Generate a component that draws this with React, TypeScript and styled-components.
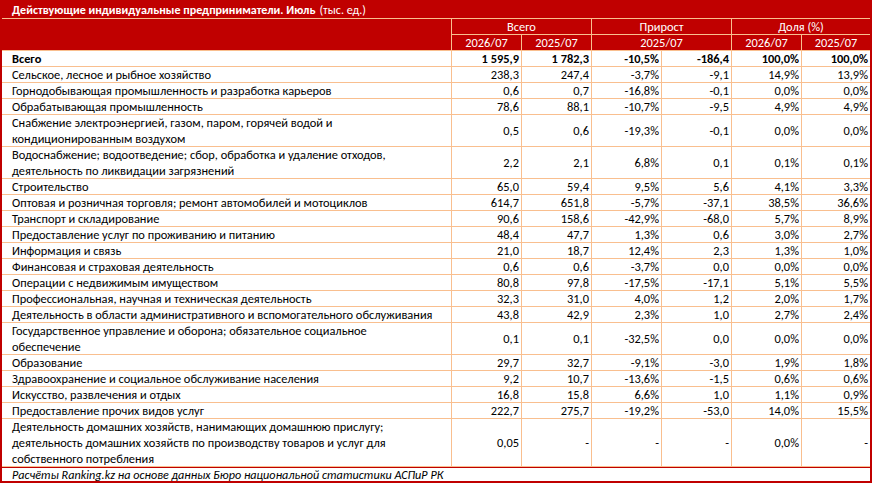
import React from "react";
import styled, { createGlobalStyle } from "styled-components";

const RED = "#C00000";
const LINE = "#F9BF8F";

const GlobalStyle = createGlobalStyle`
  html, body { margin: 0; padding: 0; background: #ffffff; }
  body { font-family: Carlito, Lato, "Liberation Sans", sans-serif; }
`;

const Frame = styled.div`
  width: 872px;
  box-sizing: border-box;
  border-left: 2px solid ${RED};
  border-right: 2px solid ${RED};
  font-family: Carlito, Lato, "Liberation Sans", sans-serif;
  font-size: 12.4px;
  color: #000;
`;

const Title = styled.div`
  height: 19px;
  box-sizing: border-box;
  background: ${RED};
  color: #fff;
  border-bottom: 1px solid ${LINE};
  padding-left: 10px;
  display: flex;
  align-items: center;
  font-size: 12.1px;
  white-space: nowrap;
`;

const TitleMain = styled.span`
  font-weight: 700;
  margin-right: 4px;
`;

const Grid = styled.div`
  display: grid;
  grid-template-columns: 450px repeat(5, 70px) 68px;
`;

const HeadCell = styled.div<{ $span?: number; $rows?: number; $last?: boolean }>`
  grid-column: span ${(p) => p.$span ?? 1};
  grid-row: span ${(p) => p.$rows ?? 1};
  height: ${(p) => (p.$rows ?? 1) * 16}px;
  box-sizing: border-box;
  background: ${RED};
  color: #fff;
  border-bottom: 1px solid ${LINE};
  border-right: ${(p) => (p.$last ? "none" : `1px solid ${LINE}`)};
  display: flex;
  align-items: center;
  justify-content: center;
  line-height: 15px;
  white-space: nowrap;
`;

const LabelCell = styled.div<{ $lines: number; $bold?: boolean }>`
  height: ${(p) => p.$lines * 16}px;
  box-sizing: border-box;
  border-bottom: 1px solid ${LINE};
  border-right: 1px solid ${LINE};
  padding-left: 10px;
  display: flex;
  align-items: center;
  line-height: 16px;
  white-space: nowrap;
  font-weight: ${(p) => (p.$bold ? 700 : 400)};
`;

const NumCell = styled.div<{ $lines: number; $bold?: boolean; $last?: boolean }>`
  height: ${(p) => p.$lines * 16}px;
  box-sizing: border-box;
  border-bottom: 1px solid ${LINE};
  border-right: ${(p) => (p.$last ? "none" : `1px solid ${LINE}`)};
  padding-right: 2px;
  display: flex;
  align-items: center;
  justify-content: flex-end;
  line-height: 15px;
  white-space: nowrap;
  font-weight: ${(p) => (p.$bold ? 700 : 400)};
`;

const Footer = styled.div`
  height: 16px;
  box-sizing: border-box;
  border-top: 1px solid ${RED};
  border-bottom: 2px solid ${RED};
  padding-left: 10px;
  display: flex;
  align-items: center;
  font-style: italic;
  font-size: 12.2px;
  white-space: nowrap;
`;

type Row = { label: string[]; values: string[]; bold?: boolean };

const rows: Row[] = [
  { label: ["Всего"], values: ["1 595,9", "1 782,3", "-10,5%", "-186,4", "100,0%", "100,0%"], bold: true },
  { label: ["Сельское, лесное и рыбное хозяйство"], values: ["238,3", "247,4", "-3,7%", "-9,1", "14,9%", "13,9%"] },
  { label: ["Горнодобывающая промышленность и разработка карьеров"], values: ["0,6", "0,7", "-16,8%", "-0,1", "0,0%", "0,0%"] },
  { label: ["Обрабатывающая промышленность"], values: ["78,6", "88,1", "-10,7%", "-9,5", "4,9%", "4,9%"] },
  { label: ["Снабжение электроэнергией, газом, паром, горячей водой и", "кондиционированным воздухом"], values: ["0,5", "0,6", "-19,3%", "-0,1", "0,0%", "0,0%"] },
  { label: ["Водоснабжение; водоотведение; сбор, обработка и удаление отходов,", "деятельность по ликвидации загрязнений"], values: ["2,2", "2,1", "6,8%", "0,1", "0,1%", "0,1%"] },
  { label: ["Строительство"], values: ["65,0", "59,4", "9,5%", "5,6", "4,1%", "3,3%"] },
  { label: ["Оптовая и розничная торговля; ремонт автомобилей и мотоциклов"], values: ["614,7", "651,8", "-5,7%", "-37,1", "38,5%", "36,6%"] },
  { label: ["Транспорт и складирование"], values: ["90,6", "158,6", "-42,9%", "-68,0", "5,7%", "8,9%"] },
  { label: ["Предоставление услуг по проживанию и питанию"], values: ["48,4", "47,7", "1,3%", "0,6", "3,0%", "2,7%"] },
  { label: ["Информация и связь"], values: ["21,0", "18,7", "12,4%", "2,3", "1,3%", "1,0%"] },
  { label: ["Финансовая и страховая деятельность"], values: ["0,6", "0,6", "-3,7%", "0,0", "0,0%", "0,0%"] },
  { label: ["Операции с недвижимым имуществом"], values: ["80,8", "97,8", "-17,5%", "-17,1", "5,1%", "5,5%"] },
  { label: ["Профессиональная, научная и техническая деятельность"], values: ["32,3", "31,0", "4,0%", "1,2", "2,0%", "1,7%"] },
  { label: ["Деятельность в области административного и вспомогательного обслуживания"], values: ["43,8", "42,9", "2,3%", "1,0", "2,7%", "2,4%"] },
  { label: ["Государственное управление и оборона; обязательное социальное", "обеспечение"], values: ["0,1", "0,1", "-32,5%", "0,0", "0,0%", "0,0%"] },
  { label: ["Образование"], values: ["29,7", "32,7", "-9,1%", "-3,0", "1,9%", "1,8%"] },
  { label: ["Здравоохранение и социальное обслуживание населения"], values: ["9,2", "10,7", "-13,6%", "-1,5", "0,6%", "0,6%"] },
  { label: ["Искусство, развлечения и отдых"], values: ["16,8", "15,8", "6,6%", "1,0", "1,1%", "0,9%"] },
  { label: ["Предоставление прочих видов услуг"], values: ["222,7", "275,7", "-19,2%", "-53,0", "14,0%", "15,5%"] },
  {
    label: [
      "Деятельность домашних хозяйств, нанимающих домашнюю прислугу;",
      "деятельность домашних хозяйств по производству товаров и услуг для",
      "собственного потребления",
    ],
    values: ["0,05", "-", "-", "-", "0,0%", "-"],
  },
];

export default function App() {
  return (
    <>
      <GlobalStyle />
      <Frame>
        <Title>
          <TitleMain>Действующие индивидуальные предприниматели. Июль</TitleMain>
          <span>(тыс. ед.)</span>
        </Title>
        <Grid>
          <HeadCell $rows={2} />
          <HeadCell $span={2}>Всего</HeadCell>
          <HeadCell $span={2}>Прирост</HeadCell>
          <HeadCell $span={2} $last>Доля (%)</HeadCell>
          <HeadCell>2026/07</HeadCell>
          <HeadCell>2025/07</HeadCell>
          <HeadCell $span={2}>2025/07</HeadCell>
          <HeadCell>2026/07</HeadCell>
          <HeadCell $last>2025/07</HeadCell>
          {rows.map((r, i) => (
            <React.Fragment key={i}>
              <LabelCell $lines={r.label.length} $bold={r.bold}>
                <div>
                  {r.label.map((l, j) => (
                    <div key={j}>{l}</div>
                  ))}
                </div>
              </LabelCell>
              {r.values.map((v, j) => (
                <NumCell key={j} $lines={r.label.length} $bold={r.bold} $last={j === 5}>
                  {v}
                </NumCell>
              ))}
            </React.Fragment>
          ))}
        </Grid>
        <Footer>Расчёты Ranking.kz на основе данных Бюро национальной статистики АСПиР РК</Footer>
      </Frame>
    </>
  );
}
